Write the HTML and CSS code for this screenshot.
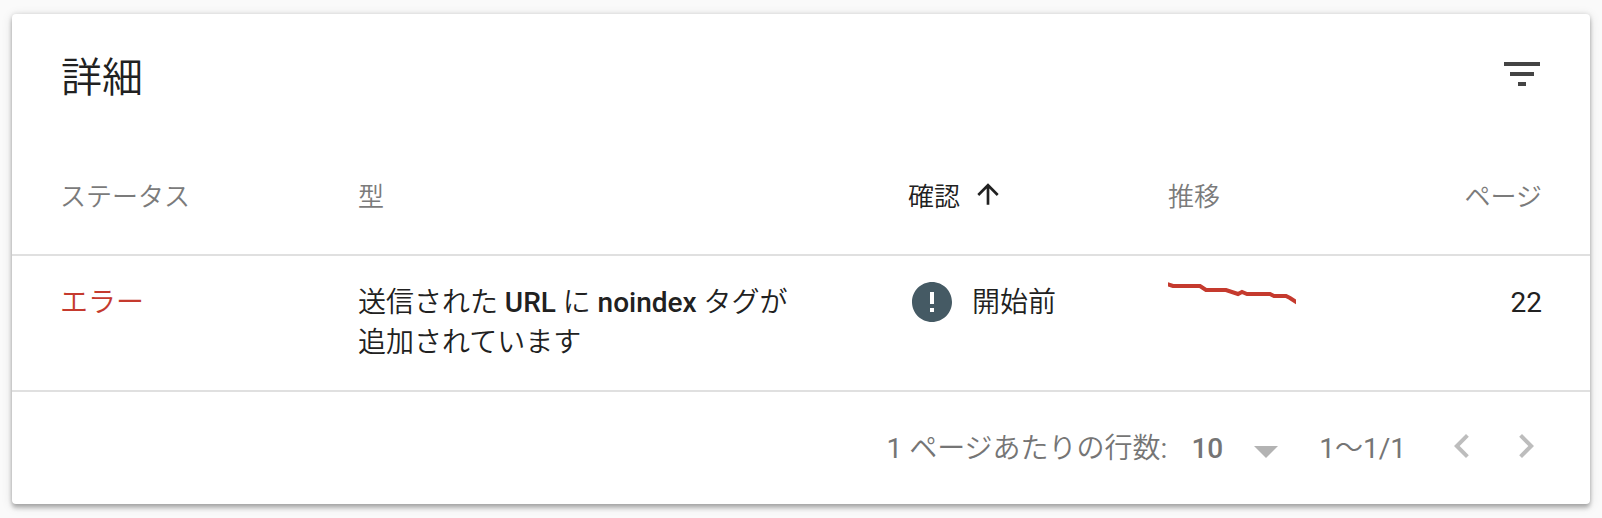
FILE: index.html
```html
<!DOCTYPE html>
<html lang="ja">
<head>
<meta charset="utf-8">
<title>詳細</title>
<link rel="stylesheet" href="styles.css">
</head>
<body>
<main class="card">
  <header class="card-header">
    <h1 class="title">詳細</h1>
    <svg class="filter" viewBox="0 0 24 24"><path d="M10 18h4v-2h-4v2zM3 6v2h18V6H3zm3 7h12v-2H6v2z"/></svg>
  </header>
  <div class="row head">
    <div>ステータス</div>
    <div>型</div>
    <div class="sorted"><span>確認</span><svg class="sort" viewBox="0 0 24 24"><path d="M4 12l1.41 1.41L11 7.83V20h2V7.83l5.58 5.59L20 12l-8-8-8 8z"/></svg></div>
    <div>推移</div>
    <div class="num">ページ</div>
  </div>
  <div class="row item">
    <div class="error">エラー</div>
    <div>送信された <b>URL</b> に <b>noindex</b> タグが<br>追加されています</div>
    <div class="state"><svg class="badge" viewBox="0 0 24 24"><path d="M12 2C6.48 2 2 6.48 2 12s4.48 10 10 10 10-4.48 10-10S17.52 2 12 2zm1 15h-2v-2h2v2zm0-4h-2V7h2v6z"/></svg><span>開始前</span></div>
    <div><svg class="trend" viewBox="0 0 128 40"><polyline points="-1,4 5,6 32,6 38,10 58,10 70,14 74,12 79,14 102,14 106,16 118,16 122,18 129,22.500"/></svg></div>
    <div class="num">22</div>
  </div>
  <footer class="pager">
    <span class="label"><span class="latin">1</span> ページあたりの行数<span class="latin">:</span></span>
    <b class="size">10</b>
    <svg class="caret" viewBox="0 0 24 12"><path d="M0 0h24L12 12z"/></svg>
    <span class="range"><span class="latin">1</span>〜<span class="latin">1/1</span></span>
    <svg class="nav prev" viewBox="0 0 24 24"><path d="M15.410 7.410L14 6l-6 6 6 6 1.410-1.410L10.830 12z"/></svg>
    <svg class="nav" viewBox="0 0 24 24"><path d="M10 6L8.590 7.410 13.170 12l-4.580 4.590L10 18l6-6z"/></svg>
  </footer>
</main>
</body>
</html>
```
FILE: styles.css
```css
* { box-sizing: border-box; }
body {
  margin: 0;
  padding: 14px 12px;
  background: #fafafa;
  color: #212121;
  font: 350 28px/40px Roboto, "Noto Sans CJK JP", sans-serif;
}
svg { display: block; flex: none; }
b { font-weight: 500; }
.latin { font-weight: 400; }
.card {
  height: 490px;
  background: #fff;
  border-radius: 4px;
  box-shadow: 0 4px 4px rgba(0,0,0,.24), 0 0 4px rgba(0,0,0,.12), 0 2px 12px rgba(0,0,0,.12);
}
.card-header {
  display: flex;
  justify-content: space-between;
  height: 126px;
  padding: 36px 44px 0 49px;
}
.title { margin: 2px 0 0; font-size: 41px; line-height: 52px; font-weight: 350; }
.filter { width: 48px; height: 48px; fill: #444; }
.row {
  display: grid;
  grid-template-columns: 298px 550px 260px 160px 1fr;
  padding: 0 48px;
  border-bottom: 2px solid #e0e0e0;
}
.head { height: 116px; padding-top: 37px; font-size: 26px; color: #7b7b7b; }
.sorted { display: flex; color: #212121; }
.sort { width: 32px; height: 32px; margin: 1px 0 0 12px; fill: #212121; }
.num { text-align: right; }
.item { height: 136px; padding-top: 27px; }
.item .num { font-weight: 400; }
.error { color: #c53a2e; }
.state { display: flex; }
.badge { width: 48px; height: 48px; margin: -5px 16px 0 0; fill: #455a64; }
.trend { width: 128px; height: 40px; margin-top: -3px; }
.trend polyline { fill: none; stroke: #c53a2e; stroke-width: 4; }
.pager {
  display: flex;
  align-items: center;
  justify-content: flex-end;
  height: 112px;
  padding: 2px 40px 0 0;
  color: #757575;
}
.size { margin-left: 24px; }
.caret { width: 24px; height: 12px; margin: 6px 41px 0 31px; fill: #b3b3b3; }
.nav { width: 48px; height: 48px; fill: #bdbdbd; margin-bottom: 6px; }
.prev { margin: 0 16px 6px 32px; }
```
